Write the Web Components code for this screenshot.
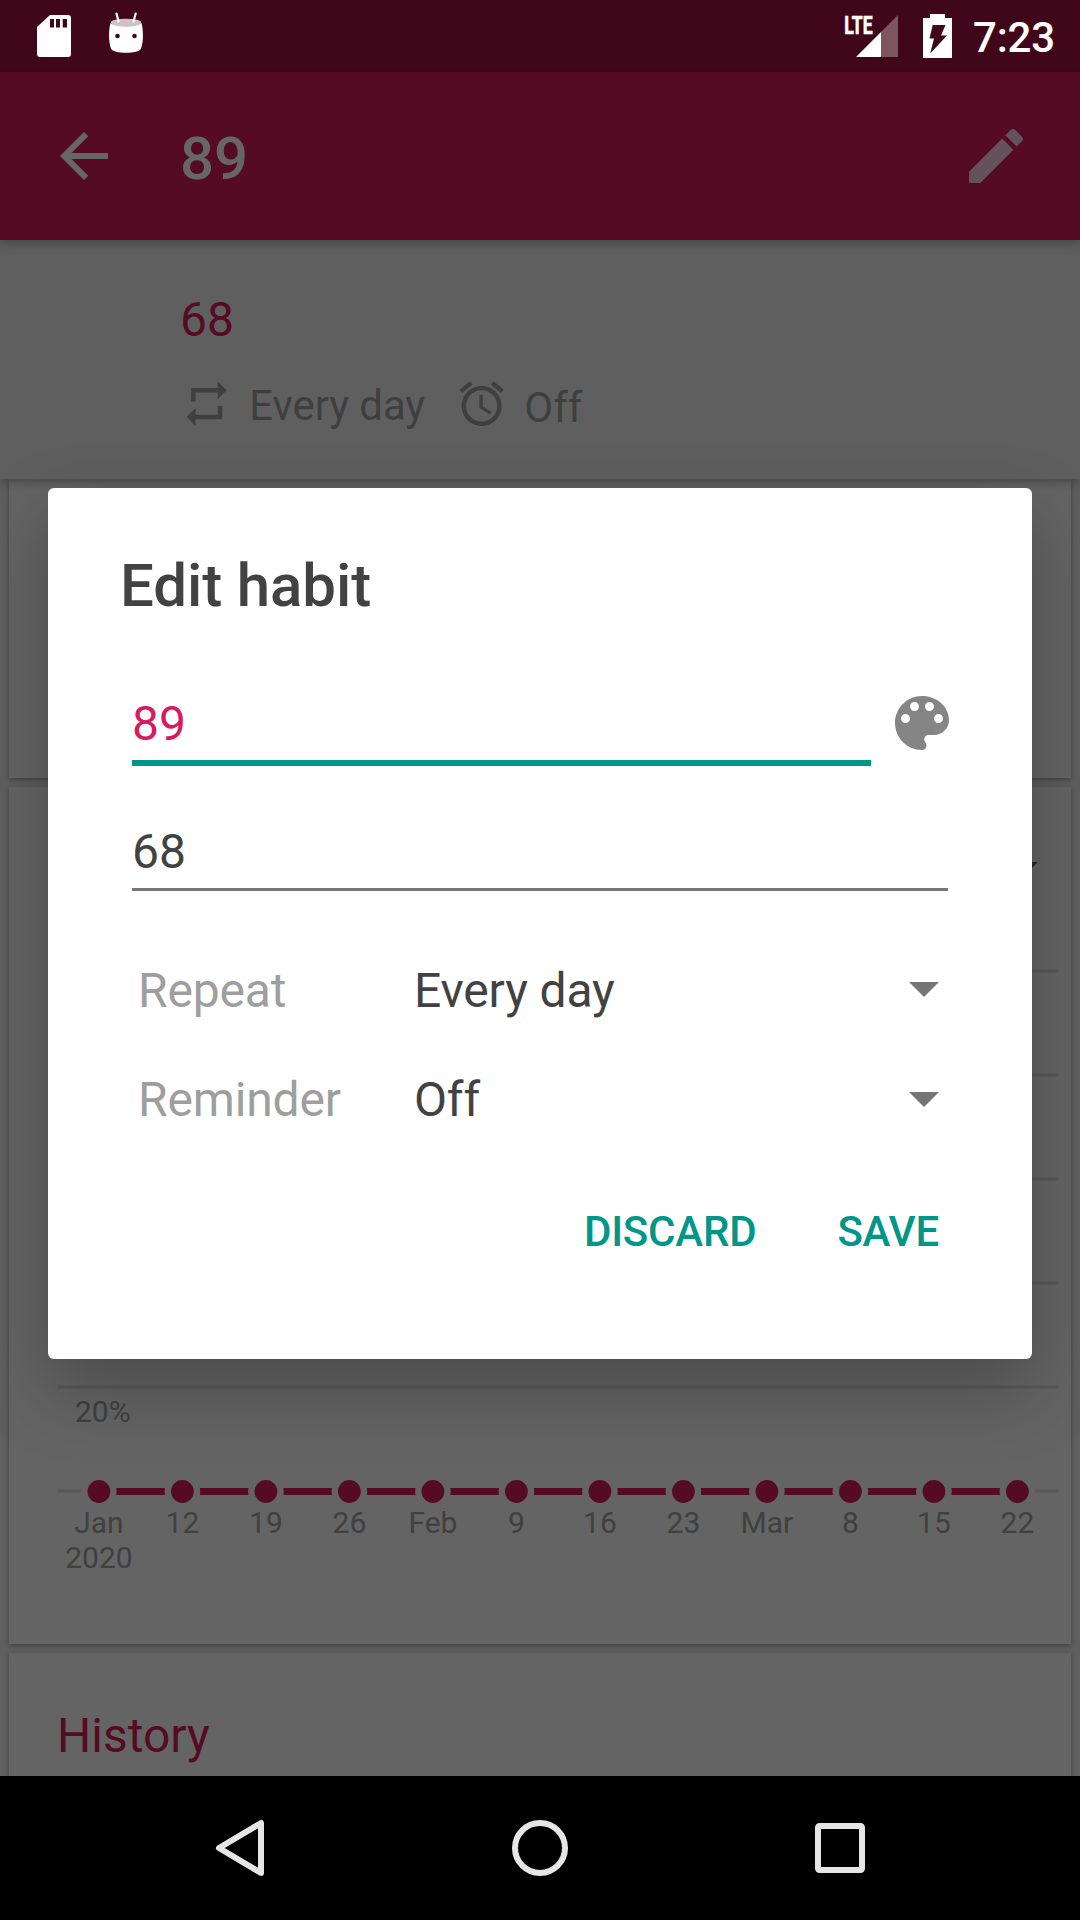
<!DOCTYPE html>
<html lang="en">
<head>
<meta charset="utf-8">
<title>Edit habit</title>
<style>
  html, body { margin: 0; padding: 0; }
  body { width: 1080px; height: 1920px; overflow: hidden; background: #5f5f5f; font-family: Roboto, "Noto Sans", sans-serif; }
</style>
</head>
<body>
<habit-app></habit-app>
<script>
const define = (name, html) => customElements.define(name, class extends HTMLElement {
  constructor() {
    super();
    this.attachShadow({ mode: 'open' }).innerHTML = html;
  }
});

const ICONS = {
  back: 'M20 11H7.83l5.59-5.59L12 4l-8 8 8 8 1.41-1.41L7.83 13H20v-2z',
  edit: 'M3 17.25V21h3.75L17.81 9.94l-3.75-3.75L3 17.25zM20.71 7.04c.39-.39.39-1.02 0-1.41l-2.34-2.34c-.39-.39-1.02-.39-1.41 0l-1.83 1.83 3.75 3.75 1.83-1.83z',
  repeat: 'M7 7h10v3l4-4-4-4v3H5v6h2V7zm10 10H7v-3l-4 4 4 4v-3h12v-6h-2v4z',
  alarm: 'M22 5.72l-4.6-3.86-1.29 1.53 4.6 3.86L22 5.72zM7.88 3.39L6.6 1.86 2 5.71l1.29 1.53 4.59-3.85zM12.5 8H11v6l4.75 2.85.75-1.23-4-2.37V8zM12 4c-4.97 0-9 4.03-9 9s4.02 9 9 9c4.97 0 9-4.03 9-9s-4.03-9-9-9zm0 16c-3.87 0-7-3.13-7-7s3.13-7 7-7 7 3.13 7 7-3.13 7-7 7z',
  palette: 'M12 3c-4.97 0-9 4.03-9 9s4.03 9 9 9c.83 0 1.5-.67 1.5-1.5 0-.39-.15-.74-.39-1.01-.23-.26-.38-.61-.38-.99 0-.83.67-1.5 1.5-1.5H16c2.76 0 5-2.24 5-5 0-4.42-4.03-8-9-8zm-5.5 9c-.83 0-1.5-.67-1.5-1.5S5.67 9 6.5 9 8 9.67 8 10.5 7.33 12 6.5 12zm3-4C8.67 8 8 7.33 8 6.5S8.67 5 9.5 5s1.5.67 1.5 1.5S10.33 8 9.5 8zm5 0c-.83 0-1.5-.67-1.5-1.5S13.67 5 14.5 5s1.5.67 1.5 1.5S15.33 8 14.5 8zm3 4c-.83 0-1.5-.67-1.5-1.5S16.67 9 17.5 9s1.5.67 1.5 1.5-.67 1.5-1.5 1.5z'
};

customElements.define('md-icon', class extends HTMLElement {
  constructor() { super(); this.attachShadow({ mode: 'open' }); }
  connectedCallback() {
    this.shadowRoot.innerHTML = `<style>:host{display:block;flex:none;width:72px;height:72px}svg{display:block;width:100%;height:100%;fill:currentColor}</style>
    <svg viewBox="0 0 24 24"><path d="${ICONS[this.getAttribute('name')]}"/></svg>`;
  }
});

define('status-bar', `
<style>
  :host { display: flex; justify-content: space-between; height: 72px; background: #40071b; color: #fff; }
  svg { display: block; flex: none; }
  .side { display: flex; }
  .left { padding-left: 37px; gap: 38px; }
  .right { padding-right: 25px; }
  time { width: 82px; font-size: 42px; font-weight: 500; line-height: 49px; letter-spacing: -.2px; margin: 13px 0 0 21px; }
</style>
<div class="side left">
  <svg width="34" height="72" viewBox="0 0 34 72"><path fill="#fff" d="M13 15H31a3 3 0 0 1 3 3V54a3 3 0 0 1-3 3H3a3 3 0 0 1-3-3V27Z"/><path fill="#40071b" d="M13 19h4v8.500h-4zM19 19h4v8.500h-4zM25.700 19h4.300v8.500h-4.300z"/></svg>
  <svg width="34" height="72" viewBox="0 0 34 72"><path fill="#fff" d="M1.500 23C6 26.800 28 26.800 32.500 23C34.500 30 34.500 42 32 48.500C30 54.300 4 54.300 2 48.500C-.5 42-.5 30 1.500 23Z"/><ellipse cx="17" cy="22.700" rx="15.200" ry="4" fill="#cfc1c6"/><path d="M7.500 13.500 9.500 21.500M26.700 13.500 24.500 21.500" stroke="#fff" stroke-width="2.200" stroke-linecap="round"/><circle cx="8.500" cy="36" r="2.300" fill="#40071b"/><circle cx="25.500" cy="36" r="2.300" fill="#40071b"/></svg>
</div>
<div class="side right">
  <svg width="54" height="72" viewBox="845 0 54 72" overflow="visible"><path fill="#7c5561" d="M898 15V57H881V32Z"/><path fill="#fff" d="M856 57 881 32V57Z"/><text transform="translate(844.300 33.700) scale(.66 1)" font-family="Roboto" font-weight="700" font-size="26.500" fill="#fff" stroke="#fff" stroke-width=".7">LTE</text></svg>
  <svg width="29" height="72" viewBox="0 0 29 72" style="margin-left:24px"><path fill="#fff" d="M7 14H22V18H29V58H0V18H7Z"/><path fill="#40071b" d="M9.700 25H22.500L18 35.500H24L7.200 53.500 11 38.500H6.500Z"/></svg>
  <time>7:23</time>
</div>`);

define('app-toolbar', `
<style>
  :host { display: flex; position: relative; z-index: 2; box-sizing: border-box; height: 168px; padding: 48px 48px 0; background: #560b25; color: #666; box-shadow: 0 4px 9px rgba(0,0,0,.25); }
  h1 { flex: 1; margin: 3px 0 0 60px; font-size: 60px; line-height: 71px; font-weight: 500; }
  .edit { color: #63525a; }
</style>
<md-icon name="back"></md-icon><h1><slot></slot></h1><md-icon class="edit" name="edit"></md-icon>`);

define('habit-header', `
<style>
  :host { display: block; position: relative; z-index: 1; box-sizing: border-box; height: 239px; padding: 51px 0 0 180px; background: #5f5f5f; color: #3f3f3f; box-shadow: 0 3px 8px rgba(0,0,0,.27); }
  .question { font-size: 48px; line-height: 57px; color: #560b25; }
  .facts { display: flex; align-items: flex-start; margin-top: 29.300px; font-size: 42px; line-height: 49px; }
  md-icon { width: 53.333px; height: 53.333px; }
  .freq { margin: 4px 0 0 16px; width: 205.600px; letter-spacing: -.1px; }
  .rem { margin: 6px 0 0 16px; }
</style>
<div class="question">68</div>
<div class="facts">
  <md-icon name="repeat"></md-icon><span class="freq">Every day</span>
  <md-icon name="alarm"></md-icon><span class="rem">Off</span>
</div>`);

define('habit-card', `
<style>
  :host { display: block; box-sizing: border-box; flex: none; background: #646464; box-shadow: 0 2px 5px rgba(0,0,0,.3); }
</style><slot></slot>`);

customElements.define('score-chart', class extends HTMLElement {
  constructor() {
    super();
    const labels = ['Jan', '12', '19', '26', 'Feb', '9', '16', '23', 'Mar', '8', '15', '22'];
    const step = 83.5, x0 = 98.9, y = 1491.5;
    const rows = [971, 1075, 1179, 1283, 1387, 1491]
      .map(v => `<path d="M57 ${v}H1059" stroke="#595959" stroke-width="3"/>`).join('');
    const dots = labels.map((t, i) => {
      const x = x0 + i * step;
      return `<circle cx="${x}" cy="${y}" r="17.800" fill="#646464"/><circle cx="${x}" cy="${y}" r="11.400" fill="#560b25"/><text x="${x}" y="1533">${t}</text>`;
    }).join('');
    this.attachShadow({ mode: 'open' }).innerHTML = `
    <style>:host{display:block}svg{display:block}text{font:30px Roboto,sans-serif;fill:#404040;text-anchor:middle}</style>
    <svg width="1062" height="857" viewBox="9 787 1062 857">
      <path d="M1008 862H1038L1023 877Z" fill="#2b2b2b"/>
      ${rows}
      <text x="75" y="1422" style="text-anchor:start">20%</text>
      <path d="M${x0} ${y}H${x0 + 11 * step}" stroke="#560b25" stroke-width="7"/>
      ${dots}
      <text x="${x0}" y="1568">2020</text>
    </svg>`;
  }
});

define('text-field', `
<style>
  :host { display: block; box-sizing: border-box; font-size: 48px; line-height: 57px; padding-bottom: 8px; border-bottom: 3px solid #777; }
</style><slot></slot>`);

define('spinner-row', `
<style>
  :host { display: flex; align-items: flex-start; height: 57px; font-size: 48px; line-height: 57px; letter-spacing: -.15px; color: #424242; }
  .label { width: 276px; color: #9e9e9e; }
  .value { flex: 1; }
  svg { display: block; margin-top: var(--arrow-top, 20px); }
</style>
<span class="label"><slot name="label"></slot></span><span class="value"><slot></slot></span>
<svg width="30" height="15" viewBox="0 0 30 15"><path d="M0 0H30L15 15Z" fill="#757575"/></svg>`);

define('edit-dialog', `
<style>
  :host { display: block; box-sizing: border-box; width: 984px; height: 871px; padding: 62px 84px 0; border-radius: 6px; background: #fff; color: #424242; box-shadow: 0 30px 72px rgba(0,0,0,.25); }
  h2 { margin: 0 0 0 -12px; font-size: 60px; line-height: 71px; font-weight: 500; letter-spacing: -.1px; }
  .name { display: flex; align-items: flex-start; margin-top: 74px; height: 71px; }
  .name text-field { flex: none; width: 739px; color: #d81b60; border-bottom: 6px solid #009688; }
  .name md-icon { margin: -8px 0 0 15px; color: #858585; }
  .desc { margin-top: 57px; }
  .spinners { display: flex; flex-direction: column; gap: 52px; margin: 71px 9px 0 6px; }
  .actions { display: flex; justify-content: flex-end; gap: 81px; margin: 79px 9px 0 0; font-size: 42px; line-height: 49px; font-weight: 500; letter-spacing: -.2px; color: #009688; }
</style>
<h2>Edit habit</h2>
<div class="name"><text-field>89</text-field><md-icon name="palette"></md-icon></div>
<text-field class="desc">68</text-field>
<div class="spinners">
  <spinner-row><span slot="label">Repeat</span>Every day</spinner-row>
  <spinner-row style="--arrow-top:21px"><span slot="label">Reminder</span>Off</spinner-row>
</div>
<div class="actions"><span>DISCARD</span><span>SAVE</span></div>`);

define('nav-bar', `
<style>
  :host { display: block; position: relative; z-index: 4; height: 144px; background: #000; }
  div { display: flex; justify-content: space-between; padding: 40px 210px 0 210px; }
  svg { display: block; fill: none; stroke: #e6e6e6; stroke-width: 6; }
</style>
<div>
  <svg width="60" height="64" viewBox="210 1816 60 64"><path stroke-linejoin="round" d="M261 1823V1873L219 1848Z"/></svg>
  <svg width="60" height="64" viewBox="510 1816 60 64"><circle cx="540" cy="1848" r="25"/></svg>
  <svg width="60" height="64" viewBox="810 1816 60 64"><rect x="818" y="1826" width="44" height="44" rx="1.500"/></svg>
</div>`);

define('habit-app', `
<style>
  :host { display: flex; flex-direction: column; position: relative; width: 1080px; height: 1920px; overflow: hidden; background: #5f5f5f; }
  main { flex: 1; min-height: 0; overflow: hidden; display: flex; flex-direction: column; gap: 9px; padding: 0 9px; }
  .overview { height: 299px; }
  .score { height: 857px; }
  .history { height: 300px; }
  h3 { margin: 0; padding: 54px 0 0 48px; font-size: 48px; line-height: 57px; font-weight: 400; color: #560b25; }
  edit-dialog { position: absolute; z-index: 3; left: 48px; top: 488px; }
</style>
<status-bar></status-bar>
<app-toolbar>89</app-toolbar>
<habit-header></habit-header>
<main>
  <habit-card class="overview"></habit-card>
  <habit-card class="score"><score-chart></score-chart></habit-card>
  <habit-card class="history"><h3>History</h3></habit-card>
</main>
<nav-bar></nav-bar>
<edit-dialog></edit-dialog>`);
</script>
</body>
</html>
